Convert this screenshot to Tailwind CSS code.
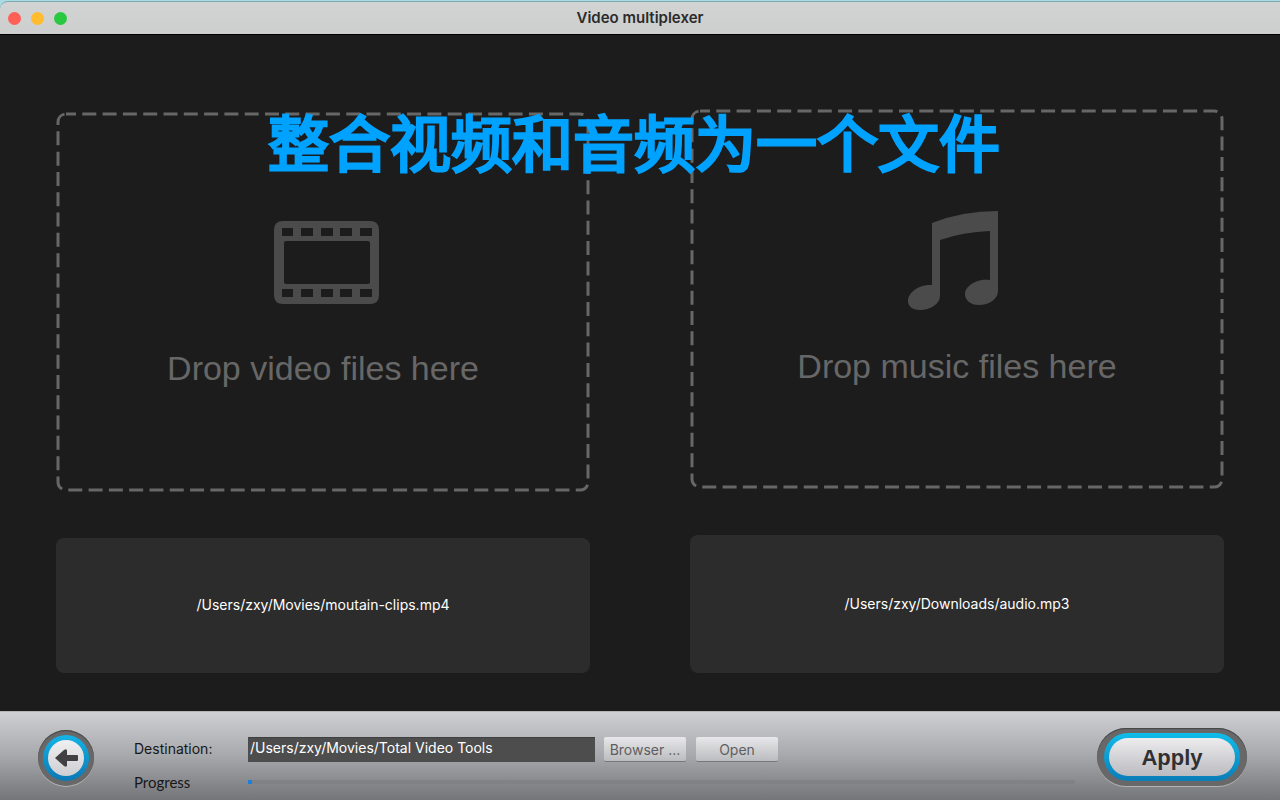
<!DOCTYPE html>
<html lang="zh">
<head>
<meta charset="utf-8">
<meta name="viewport" content="width=device-width, initial-scale=1">
<title>Video multiplexer</title>
<script src="https://cdn.jsdelivr.net/npm/@tailwindcss/browser@4"></script>
</head>
<body class="relative flex min-h-screen flex-col bg-[#1c1c1c] font-['Inter','Noto_Sans_CJK_SC',sans-serif]">
  <header class="bg-[#a9dce2]">
    <div class="mt-px grid h-[33px] grid-cols-[1fr_auto_1fr] items-center rounded-tl-lg border-t border-[#7fa9ae] bg-linear-to-b from-[#d2d4d3] to-[#cdcfce] px-2">
      <div class="flex gap-[10px]">
        <button aria-label="Close" class="size-[13px] rounded-full bg-[#fe5f57]"></button>
        <button aria-label="Minimize" class="size-[13px] rounded-full bg-[#febc2e]"></button>
        <button aria-label="Zoom" class="size-[13px] rounded-full bg-[#28c840]"></button>
      </div>
      <div class="text-[15px] leading-5 font-semibold text-[#2b2b2b]">Video multiplexer</div>
    </div>
  </header>

  <h1 class="absolute inset-x-0 top-[96px] z-10 pr-3 text-center font-['Noto_Sans_CJK_SC',sans-serif] text-[61px] leading-[90px] font-normal text-[#00a2ff] [-webkit-text-stroke:3px_#00a2ff] [stroke-linejoin:round]">整合视频和音频为一个文件</h1>

  <main class="grid flex-1 grid-cols-2 gap-[100px] border-t border-black px-14 pt-[74px] pb-[38px]">
    <section class="flex flex-col gap-[46px] pt-[3px]">
      <div class="relative flex h-[380px] flex-col items-center pt-[109px]">
        <svg class="absolute inset-0 size-full" fill="none" stroke="#676767" stroke-width="3" stroke-dasharray="14 6.3" stroke-dashoffset="4" aria-hidden="true"><rect x="2" y="2" rx="8" class="h-[calc(100%-4px)] w-[calc(100%-4px)]"/></svg>
        <svg class="ml-[7px] h-[84px] w-[106px]" viewBox="0 0 106 84" fill="#4b4b4b" aria-hidden="true">
          <path fill-rule="evenodd" d="M9 0H96Q105 0 105 9V74Q105 83 96 83H9Q0 83 0 74V9Q0 0 9 0ZM8 7V15H19V7ZM27 7V15H39V7ZM47 7V15H59V7ZM66 7V15H78V7ZM86 7V15H98V7ZM8 68V76H19V68ZM27 68V76H39V68ZM47 68V76H59V68ZM66 68V76H78V68ZM86 68V76H98V68ZM12 20Q10 20 10 22V61Q10 63 12 63H94Q96 63 96 61V22Q96 20 94 20Z"/>
        </svg>
        <p class="mt-[43px] font-['Liberation_Sans',sans-serif] text-[34px] leading-10 text-[#676767]">Drop video files here</p>
      </div>
      <div class="flex flex-1 items-center justify-center rounded-lg bg-[#2c2c2c] pb-[2px] text-sm text-white"><p>/Users/zxy/Movies/moutain-clips.mp4</p></div>
    </section>
    <section class="flex flex-col gap-[46px]">
      <div class="relative flex h-[380px] flex-col items-center pt-[102px]">
        <svg class="absolute inset-0 size-full" fill="none" stroke="#676767" stroke-width="3" stroke-dasharray="14 6.3" stroke-dashoffset="4" aria-hidden="true"><rect x="2" y="2" rx="8" class="h-[calc(100%-4px)] w-[calc(100%-4px)]"/></svg>
        <svg class="mr-2 h-[100px] w-[90px]" viewBox="0 0 90 100" fill="#4b4b4b" aria-hidden="true">
          <path d="M24 12Q54 0 90 0V80C90 88 81 94 71 94C62 94 57 89 57 83C57 75 69 67 82 69V20Q55 21 32 29V85C32 93 22 99 12 99C4 99 0 95 0 90C0 81 12 73 24 74Z"/>
        </svg>
        <p class="mt-[35px] font-['Liberation_Sans',sans-serif] text-[34px] leading-10 text-[#676767]">Drop music files here</p>
      </div>
      <div class="flex flex-1 items-center justify-center rounded-lg bg-[#2c2c2c] text-sm text-white"><p>/Users/zxy/Downloads/audio.mp3</p></div>
    </section>
  </main>

  <footer class="flex h-[89px] items-center border-t border-[#b4b4b6] bg-linear-to-b from-[#cfd0d2] via-[#a7a8ac] to-[#747579] pr-[33px] pl-[38px]">
    <button aria-label="Back" class="mt-1 flex size-14 items-center justify-center rounded-full bg-[#686869] shadow-[0_1px_0_#b4b4b7,inset_0_1px_1px_#444446]">
      <span class="flex size-[46px] items-center justify-center rounded-full bg-linear-to-b from-[#14b3e6] to-[#0b78b5]">
        <span class="flex size-9 items-center justify-center rounded-full bg-linear-to-b from-[#f0eff1] to-[#cfced2]">
          <svg class="h-[18px] w-[23px]" viewBox="0 0 23 18" fill="#414143" aria-hidden="true"><path d="M0 9L9 1Q12-1 12 2V6H22Q23 6 23 7V11Q23 12 22 12H12V16Q12 19 9 17Z"/></svg>
        </span>
      </span>
    </button>
    <div class="ml-10 grid flex-1 grid-cols-[114px_1fr] items-center self-start pt-5 text-sm text-[#171717]">
      <label for="dest">Destination:</label>
      <div class="flex h-[34px] items-center">
        <input id="dest" type="text" value="/Users/zxy/Movies/Total Video Tools" class="h-[25px] w-[347px] border-t border-[#404040] bg-[#4d4d4d] px-[2px] pb-1 text-white outline-none">
        <button class="ml-[9px] h-[25px] w-[82px] rounded-xs border-b border-[#77787b] bg-linear-to-b from-[#e8e8ea] to-[#bbbcbf] pt-[2px] whitespace-nowrap text-[#5e5e60]">Browser ...</button>
        <button class="ml-[10px] h-[25px] w-[82px] rounded-xs border-b border-[#77787b] bg-linear-to-b from-[#e8e8ea] to-[#bbbcbf] pt-[2px] text-[#5e5e60]">Open</button>
      </div>
      <label for="progress" class="font-['Lato',sans-serif] text-[15px] leading-8">Progress</label>
      <progress id="progress" value="5" max="1000" class="h-1 w-full appearance-none [&::-webkit-progress-bar]:bg-[#818286] [&::-webkit-progress-value]:bg-[#1a7de0]"></progress>
    </div>
    <button class="mt-[2px] ml-[22px] h-[58px] w-[150px] rounded-full bg-[#686869] px-[7px] py-[5px] shadow-[0_1px_0_#b4b4b7,inset_0_1px_1px_#444446]">
      <span class="block h-full rounded-full bg-linear-to-b from-[#10bdea] to-[#0b7db8] p-[5px]">
        <span class="flex h-full items-center justify-center rounded-full bg-linear-to-b from-[#ededef] to-[#bbbbc0] font-['Liberation_Sans',sans-serif] text-[22px] font-bold text-[#303032]">Apply</span>
      </span>
    </button>
  </footer>
</body>
</html>
